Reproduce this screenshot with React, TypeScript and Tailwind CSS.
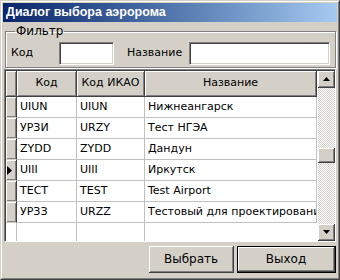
const rows = [
  { code: 'UIUN', icao: 'UIUN', name: 'Нижнеангарск' },
  { code: 'УРЗИ', icao: 'URZY', name: 'Тест НГЭА' },
  { code: 'ZYDD', icao: 'ZYDD', name: 'Дандун' },
  { code: 'UIII', icao: 'UIII', name: 'Иркутск', current: true },
  { code: 'ТЕСТ', icao: 'TEST', name: 'Test Airport' },
  { code: 'УРЗЗ', icao: 'URZZ', name: 'Тестовый для проектирования' },
]

const raised =
  'bg-[#d4d0c8] border-r border-b border-[#404040] shadow-[inset_1px_1px_0_#fff,inset_-1px_-1px_0_#808080]'
const sunken =
  'bg-white border border-t-[#808080] border-l-[#808080] border-r-white border-b-white shadow-[inset_1px_1px_0_#404040,inset_-1px_-1px_0_#d4d0c8]'

const Arrow = ({ up }: { up?: boolean }) => (
  <svg width="7" height="4" viewBox="0 0 7 4">
    <path d={up ? 'M3.5 0 L7 4 L0 4 Z' : 'M0 0 L7 0 L3.5 4 Z'} fill="#000" />
  </svg>
)

export default function App() {
  return (
    <div className="w-[340px] h-[280px] bg-[#d4d0c8] border border-t-[#d4d0c8] border-l-[#d4d0c8] border-r-[#404040] border-b-[#404040] font-['DejaVu_Sans',sans-serif] text-[11px] text-black">
      <div className="h-full flex flex-col border border-t-white border-l-white border-r-[#808080] border-b-[#808080] p-px">
        {/* title bar */}
        <div className="h-[19px] shrink-0 flex items-center pl-[3px] bg-gradient-to-r from-[#0a246a] to-[#a6caf0] text-white font-['Liberation_Sans',sans-serif] font-bold text-[12.5px]">
          Диалог выбора аэророма
        </div>

        {/* filter */}
        <fieldset className="mx-[2px] mt-[2px] h-[44px] shrink-0 border border-[#808080] shadow-[inset_1px_1px_0_#fff,1px_1px_0_#fff] px-[5px]">
          <legend className="ml-[4px] px-px text-[12px] leading-[14px]">Фильтр</legend>
          <div className="flex items-center h-[24px] mt-[3px]">
            <span className="w-[48px]">Код</span>
            <div className={`${sunken} w-[55px] h-[23px]`} />
            <span className="ml-[13px] w-[62px]">Название</span>
            <div className={`${sunken} w-[141px] h-[23px]`} />
          </div>
        </fieldset>

        {/* grid */}
        <div className="mx-px mt-px h-[173px] shrink-0 flex border border-t-[#808080] border-l-[#808080] border-r-white border-b-white shadow-[inset_1px_1px_0_#404040]">
          <div className="flex-1 flex flex-col bg-white mt-px ml-px">
            <div className="flex h-[26px] shrink-0">
              <div className={`${raised} w-[11px]`} />
              <div className={`${raised} w-[60px] flex items-center justify-center`}>Код</div>
              <div className={`${raised} w-[68px] flex items-center justify-center`}>Код ИКАО</div>
              <div className={`${raised} w-[172px] flex items-center justify-center`}>Название</div>
            </div>
            {rows.map((r) => (
              <div key={r.code} className="flex h-[21px] shrink-0">
                <div className={`${raised} w-[11px] border-b-[#d4d0c8] flex items-center`}>
                  {r.current && (
                    <svg width="6" height="9" viewBox="0 0 6 9" className="ml-[1px]">
                      <path d="M0 0 L5 4.5 L0 9 Z" fill="#000" />
                    </svg>
                  )}
                </div>
                <div className="w-[60px] border-r border-b border-[#c0c0c0] flex items-center pl-[3px]">{r.code}</div>
                <div className="w-[68px] border-r border-b border-[#c0c0c0] flex items-center pl-[3px]">{r.icao}</div>
                <div className="w-[172px] border-r border-b border-[#c0c0c0] flex items-center pl-[3px] overflow-hidden whitespace-nowrap">
                  {r.name}
                </div>
              </div>
            ))}
            <div className="flex flex-1">
              <div className="w-[11px] border-r border-[#c0c0c0]" />
              <div className="w-[60px] border-r border-[#c0c0c0]" />
              <div className="w-[68px] border-r border-[#c0c0c0]" />
              <div className="w-[172px]" />
            </div>
          </div>

          {/* scrollbar */}
          <div className="w-[17px] shrink-0 flex flex-col mt-px">
            <div className={`${raised} h-[17px] flex items-center justify-center`}>
              <Arrow up />
            </div>
            <div className="flex-1 flex flex-col bg-[repeating-conic-gradient(#fff_0_25%,#d4d0c8_0_50%)] bg-[length:2px_2px]">
              <div className="h-[60px]" />
              <div className={`${raised} h-[15px]`} />
            </div>
            <div className={`${raised} h-[17px] flex items-center justify-center`}>
              <Arrow />
            </div>
          </div>
        </div>

        {/* buttons */}
        <div className="flex justify-end gap-[3px] mt-[4px] pr-px">
          <button className={`${raised} w-[85px] h-[27px] text-[12px]`}>Выбрать</button>
          <div className="border border-black">
            <button className={`${raised} w-[97px] h-[25px] text-[12px]`}>Выход</button>
          </div>
        </div>
      </div>
    </div>
  )
}
